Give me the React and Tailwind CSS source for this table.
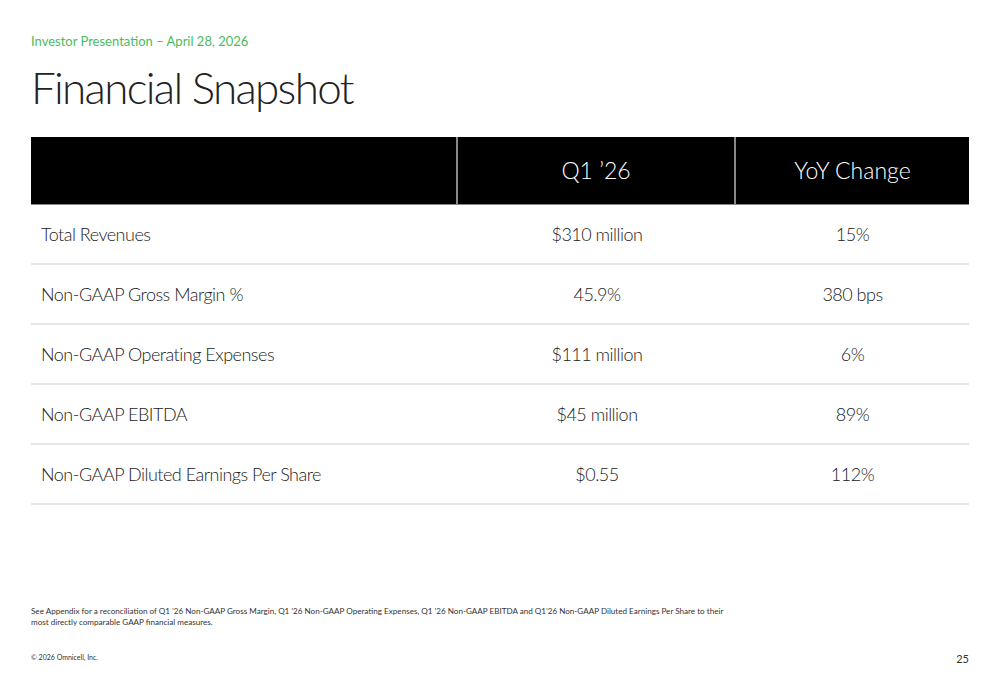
export default function App() {
  const rows = [
    ["Total Revenues", "$310 million", "15%"],
    ["Non-GAAP Gross Margin %", "45.9%", "380 bps"],
    ["Non-GAAP Operating Expenses", "$111 million", "6%"],
    ["Non-GAAP EBITDA", "$45 million", "89%"],
    ["Non-GAAP Diluted Earnings Per Share", "$0.55", "112%"],
  ];
  return (
    <div className="w-[1000px] h-[685px] bg-white flex flex-col px-[31px] text-[#222]" style={{ fontFamily: "Lato, 'Open Sans', sans-serif" }}>
      <div className="pt-[32px] text-[13px] leading-[18px] text-[#4cbb5c]">Investor Presentation – April 28, 2026</div>
      <h1 className="mt-[10px] text-[44px] leading-[54px] tracking-[-1.7px] text-[#222] font-light">Financial Snapshot</h1>
      <div className="mt-[23px] w-[938px]">
        <div className="grid grid-cols-[427px_278px_233px] h-[68px] bg-black text-white text-[23px] font-light border-b border-[#888]">
          <div className="border-r-2 border-[#888]"></div>
          <div className="border-r-2 border-[#888] flex items-center justify-center">Q1 ’26</div>
          <div className="flex items-center justify-center">YoY Change</div>
        </div>
        {rows.map((r) => (
          <div key={r[0]} className="grid grid-cols-[427px_278px_233px] h-[60px] border-b-2 border-[#e6e6e6] text-[18px] font-light tracking-[-0.5px] text-[#222]">
            <div className="flex items-center pl-[10px]">{r[0]}</div>
            <div className="flex items-center justify-center">{r[1]}</div>
            <div className="flex items-center justify-center">{r[2]}</div>
          </div>
        ))}
      </div>
      <div className="mt-[101px] text-[8.1px] leading-[11px] text-[#333] w-[702px]">
        See Appendix for a reconciliation of Q1 ’26 Non-GAAP Gross Margin, Q1 ’26 Non-GAAP Operating Expenses, Q1 ’26 Non-GAAP EBITDA and Q1’26 Non-GAAP Diluted Earnings Per Share to their most directly comparable GAAP financial measures.
      </div>
      <div className="mt-[24px] flex justify-between items-start">
        <div className="text-[7px] text-[#333]">© 2026 Omnicell, Inc.</div>
        <div className="text-[11px] text-[#333] mt-[-1px]">25</div>
      </div>
    </div>
  );
}
